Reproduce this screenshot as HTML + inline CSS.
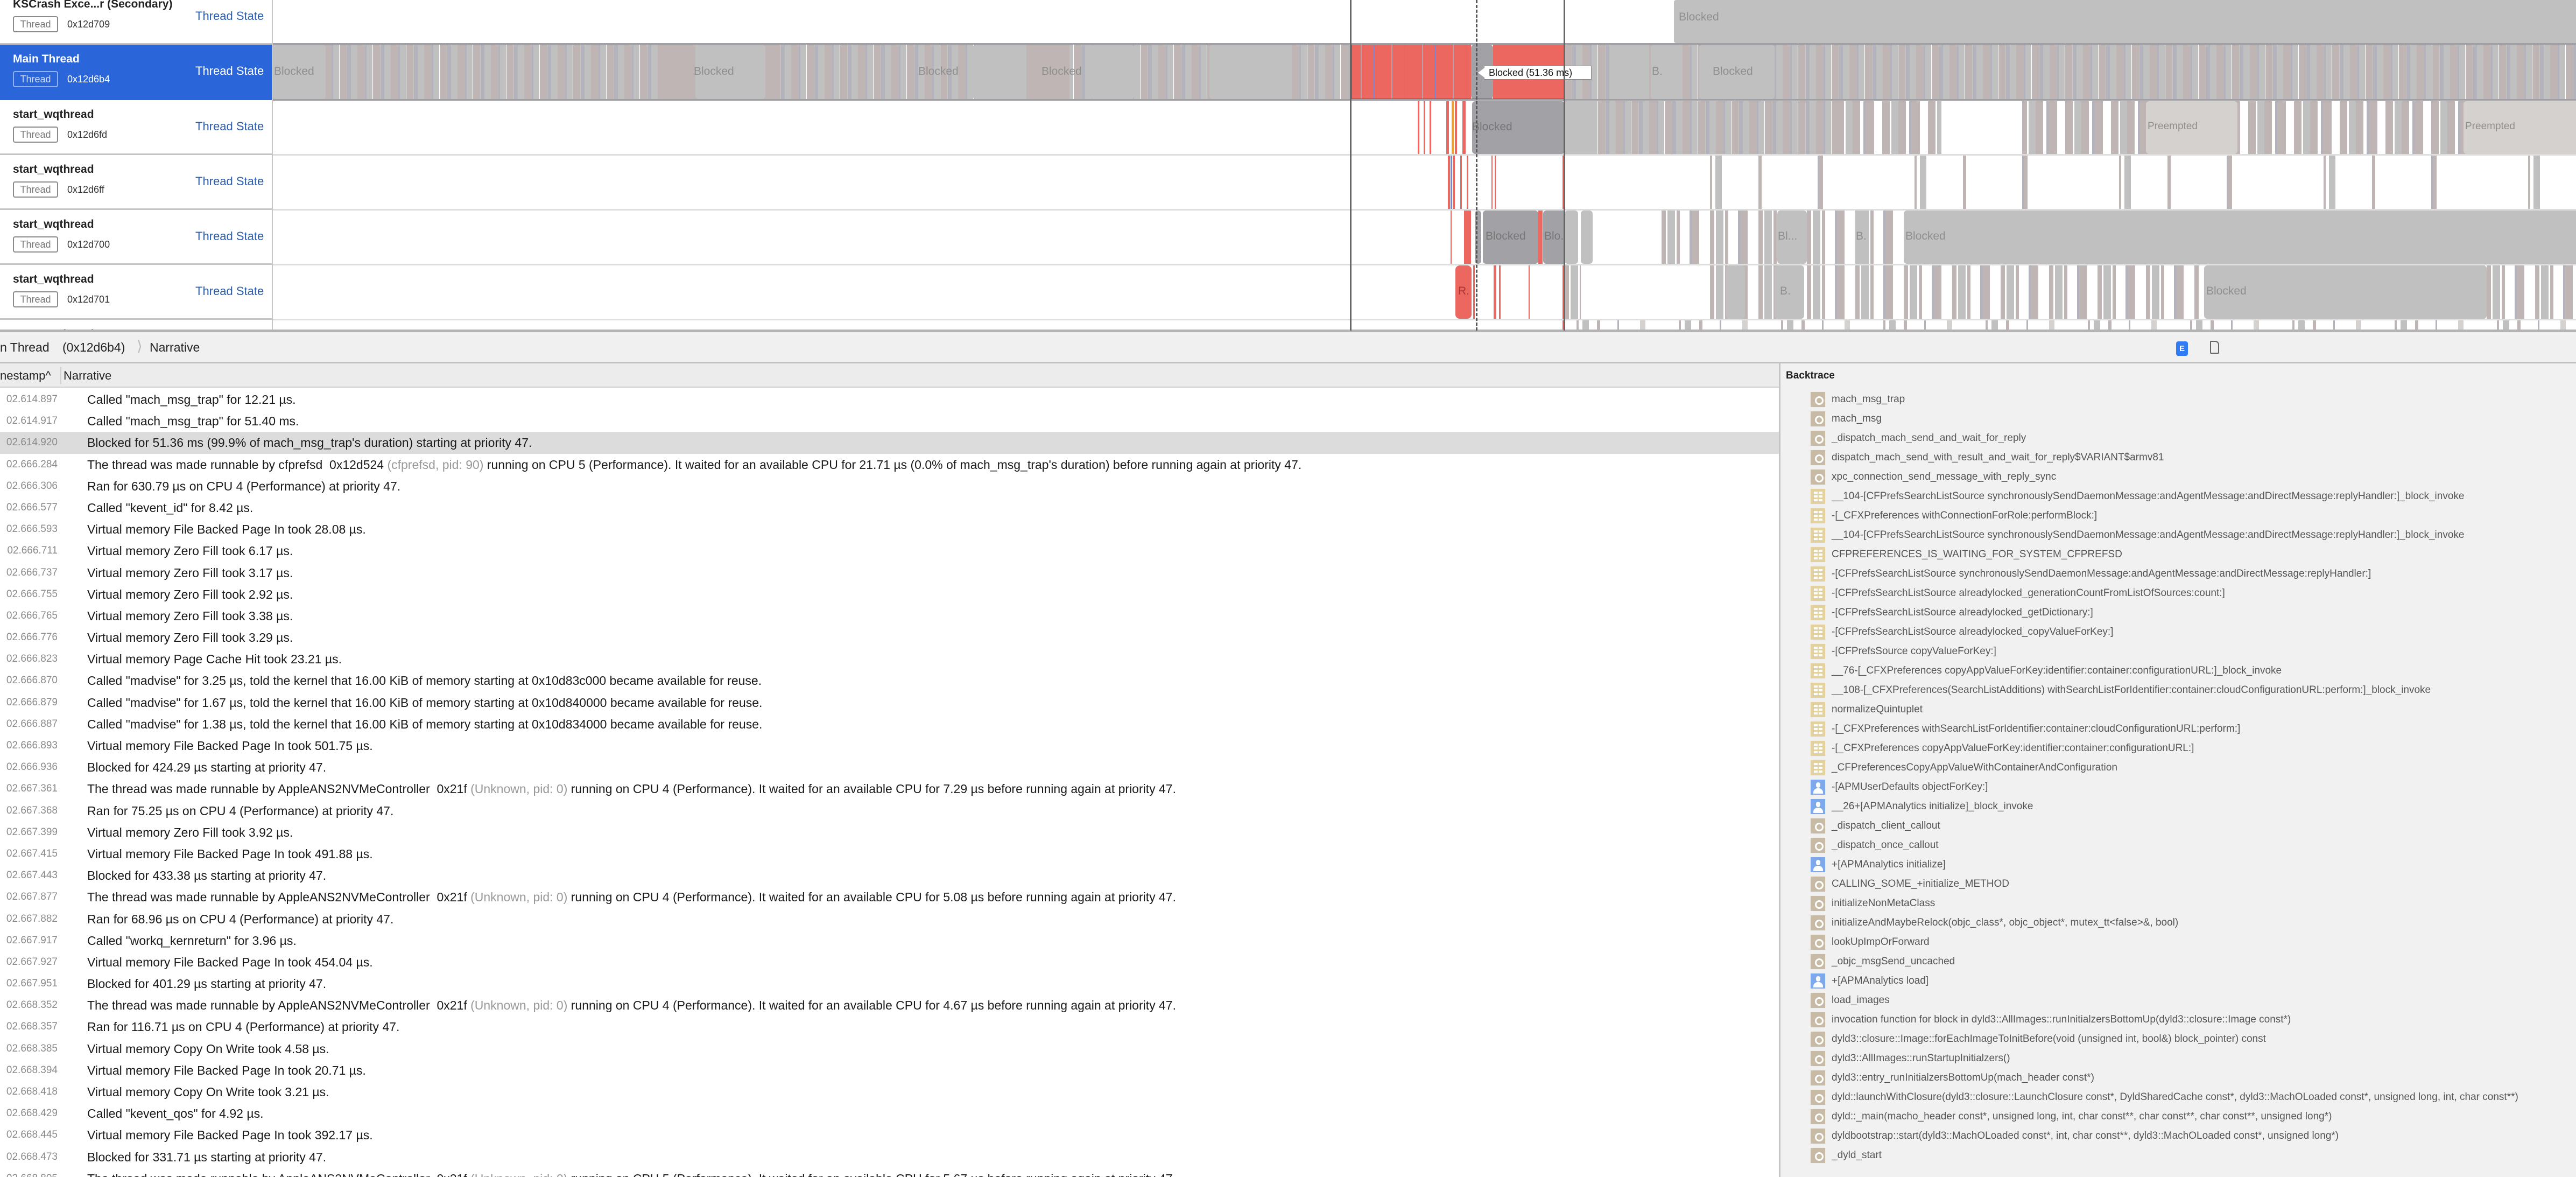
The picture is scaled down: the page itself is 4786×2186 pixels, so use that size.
<!DOCTYPE html>
<html><head><meta charset="utf-8"><style>
*{margin:0;padding:0;box-sizing:border-box}
body{width:4786px;height:2186px;overflow:hidden;background:#fff;font-family:"Liberation Sans",sans-serif;position:relative}
.a{position:absolute}
.left{left:0;top:0;width:507px;height:614px;border-right:2px solid #c8c8c8;overflow:hidden}
.trk{position:absolute;left:0;width:507px;height:102px;border-bottom:3px solid #c4c4c4}
.nm{position:absolute;left:24px;font-weight:bold;font-size:21px;color:#222;line-height:24px}
.badge{position:absolute;left:24px;height:30px;width:84px;border:2px solid #8a8a8a;border-radius:4px;font-size:18px;color:#777;text-align:center;line-height:26px}
.hex{position:absolute;left:125px;font-size:18px;color:#333}
.ts{position:absolute;left:363px;font-size:22px;color:#2c5fb0}
.row{position:absolute;left:507px;width:4279px;height:102px;overflow:hidden}
.sep{position:absolute;left:507px;width:4279px;height:3px;background:#dedede}
.blk{position:absolute;top:0;height:100%;background:#c0c0c0;border-radius:6px}
.lbl{position:absolute;font-size:21px;color:#8f8f8f}
.st1{background:repeating-linear-gradient(90deg,#bfb5b5 0 13px,#c8c4c4 13px 14px,#b2b3bc 14px 21px,#c0c0c0 21px 33px,#bfb5b5 33px 47px,#b2b3bc 47px 50px,#c0c0c0 50px 61px,#fff 61px 62px)}
.st2{background:repeating-linear-gradient(90deg,#fff 0 22px,#bfb5b5 22px 26px,#fff 26px 33px,#c0c0c0 33px 45px,#fff 45px 60px,#bfb5b5 60px 66px,#fff 66px 98px,#b2b3bc 98px 101px,#fff 101px 140px,#d5d1ce 140px 150px,#fff 150px 190px)}
.st2d{background:repeating-linear-gradient(90deg,#bfb5b5 0 14px,#fff 14px 17px,#c0c0c0 17px 30px,#bfb5b5 30px 44px,#fff 44px 50px,#b2b3bc 50px 54px,#bfb5b5 54px 70px,#fff 70px 85px)}
.st4{background:repeating-linear-gradient(90deg,#fff 0 60px,#bfb5b5 60px 64px,#fff 64px 70px,#c0c0c0 70px 82px,#fff 82px 150px,#bfb5b5 150px 156px,#fff 156px 260px,#b2b3bc 260px 263px,#bfb5b5 263px 270px,#fff 270px 380px)}
.st3{background:repeating-linear-gradient(90deg,#bfb5b5 0 8px,#fff 8px 11px,#c0c0c0 11px 25px,#fff 25px 28px,#bfb5b5 28px 34px,#fff 34px 52px,#b2b3bc 52px 56px,#bfb5b5 56px 70px,#fff 70px 90px)}
.red{position:absolute;top:0;height:100%;background:#eb675f}
.vl{position:absolute;top:0;height:614px;width:3px;background:#666}
.bc{left:0;top:614px;width:4786px;height:61px;background:#f0f0f0;border-top:3px solid #b4b4b4;border-bottom:3px solid #c0c0c0}
.hdr{left:0;top:675px;width:3305px;height:45px;background:#ececec;border-bottom:2px solid #d0d0d0;font-size:22px;color:#222}
.nar{left:0;top:722px;width:3305px;height:1464px;overflow:hidden}
.nr{height:40.2px;line-height:40.2px;white-space:nowrap;font-size:23px;color:#1a1a1a;position:relative}
.nr .t{position:absolute;left:0;width:107px;text-align:right;color:#8a8a8a;font-size:19px;overflow:hidden;direction:rtl}
.nr .x{position:absolute;left:162px}
.g{color:#999}
.right{left:3305px;top:675px;width:1481px;height:1511px;background:#f1f1f1;border-left:3px solid #c4c4c4;overflow:hidden}
.br{position:absolute;left:55px;height:36px;line-height:36px;white-space:nowrap;font-size:19px;color:#555}
.ic{position:absolute;left:0;top:3px;width:29px;height:30px;border:1px solid #eee}
.gear{background:#c8bba6}
.gear:after{content:"";position:absolute;left:8px;top:8px;width:10px;height:10px;border:3px solid #fff;border-radius:50%}
.cf{background:#e3d1a0}
.cf:after{content:"";position:absolute;left:6px;top:5px;width:16px;height:18px;background:repeating-linear-gradient(0deg,#fff 0 4px,transparent 4px 7px);}
.cf:before{content:"";position:absolute;left:13px;top:4px;width:2px;height:22px;background:#e3d1a0;z-index:2}
.usr{background:#7ea8ec}
.usr:after{content:"";position:absolute;left:10px;top:5px;width:8px;height:10px;background:#fff;border-radius:4px}
.usr:before{content:"";position:absolute;left:5px;top:16px;width:18px;height:10px;background:#fff;border-radius:8px 8px 0 0}
.bt{position:absolute;left:40px;}
</style></head><body>

<div class="a left">
 <div class="trk" style="top:-19px;height:102px"><div class="nm" style="top:15px">KSCrash Exce...r (Secondary)</div><div class="badge" style="top:49px">Thread</div><div class="hex" style="top:54px">0x12d709</div><div class="ts" style="top:36px">Thread State</div></div>
 <div class="trk" style="top:83px;height:103px;background:#2a66d9;border-bottom:none"><div class="nm" style="top:15px;color:#fff">Main Thread</div><div class="badge" style="top:49px;border-color:#8fb0ee;color:#cfdcf7">Thread</div><div class="hex" style="top:54px;color:#fff">0x12d6b4</div><div class="ts" style="top:36px;color:#fff">Thread State</div></div>
 <div class="trk" style="top:186px;height:102px"><div class="nm" style="top:15px">start_wqthread</div><div class="badge" style="top:49px">Thread</div><div class="hex" style="top:54px">0x12d6fd</div><div class="ts" style="top:36px">Thread State</div></div>
 <div class="trk" style="top:288px;height:102px"><div class="nm" style="top:15px">start_wqthread</div><div class="badge" style="top:49px">Thread</div><div class="hex" style="top:54px">0x12d6ff</div><div class="ts" style="top:36px">Thread State</div></div>
 <div class="trk" style="top:390px;height:102px"><div class="nm" style="top:15px">start_wqthread</div><div class="badge" style="top:49px">Thread</div><div class="hex" style="top:54px">0x12d700</div><div class="ts" style="top:36px">Thread State</div></div>
 <div class="trk" style="top:492px;height:102px"><div class="nm" style="top:15px">start_wqthread</div><div class="badge" style="top:49px">Thread</div><div class="hex" style="top:54px">0x12d701</div><div class="ts" style="top:36px">Thread State</div></div>
 <div class="trk" style="top:594px;height:30px;border:none"><div class="nm" style="top:15px">start_wqthread</div></div>
</div>

<div class="sep" style="top:80px;background:#a0a0a4"></div>
<div class="sep" style="top:184px;background:#a0a0a4"></div>
<div class="sep" style="top:286px"></div>
<div class="sep" style="top:388px"></div>
<div class="sep" style="top:490px"></div>
<div class="sep" style="top:592px"></div>
<div class="a" style="left:0;top:612px;width:4786px;height:3px;background:#b4b4b4"></div>

<div class="row" style="top:0;height:80px">
 <div class="blk" style="left:2603px;width:1700px;border-radius:4px"></div>
 <div class="lbl" style="left:2612px;top:20px">Blocked</div>
</div>
<div class="row" style="top:83px;height:101px">
 <div class="a st1" style="left:0;top:0;width:2003px;height:101px"></div>
 <div class="blk" style="left:0;width:98px"></div>
 <div class="blk" style="left:720px;width:220px;background:#bfb5b5;border-radius:0"></div>
 <div class="blk" style="left:785px;width:130px"></div>
 <div class="blk" style="left:1300px;width:120px"></div>
 <div class="blk" style="left:1400px;width:80px;background:#bfb5b5;border-radius:0"></div>
 <div class="blk" style="left:1520px;width:80px"></div>
 <div class="blk" style="left:1740px;width:150px"></div>
 <div class="lbl" style="left:2px;top:38px">Blocked</div>
 <div class="lbl" style="left:782px;top:38px">Blocked</div>
 <div class="lbl" style="left:1199px;top:38px">Blocked</div>
 <div class="lbl" style="left:1428px;top:38px">Blocked</div>
 <div class="red" style="left:2003px;width:223px"></div>
 <div class="a" style="left:2003px;top:0;width:223px;height:101px;background:repeating-linear-gradient(90deg,transparent 0 18px,#b8a0a8 18px 20px,transparent 20px 42px,#6f88d8 42px 43px,transparent 43px 57px)"></div>
 <div class="blk" style="left:2226px;width:41px;background:#a2a1a5"></div>
 <div class="red" style="left:2267px;width:133px"></div>
 <div class="a" style="left:2003px;top:-2px;width:397px;height:104px;border:2px solid #2f62e0"></div>
 <div class="a st1" style="left:2400px;top:0;width:1879px;height:101px"></div>
 <div class="blk" style="left:2490px;width:60px"></div>
 <div class="blk" style="left:2560px;width:50px"></div>
 <div class="blk" style="left:2650px;width:140px"></div>
 <div class="lbl" style="left:2562px;top:38px">B.</div>
 <div class="lbl" style="left:2675px;top:38px">Blocked</div>
</div>
<div class="a" style="left:2757px;top:122px;width:200px;height:26px;background:#fff;border:1px solid #888;font-size:18px;line-height:24px;padding-left:8px;color:#111">Blocked (51.36 ms)</div>
<div class="a" style="left:2746px;top:126px;width:0;height:0;border-top:9px solid transparent;border-bottom:9px solid transparent;border-right:12px solid #fff"></div>
<div class="row" style="top:188px;height:98px">
 <div class="red" style="left:2127px;width:3px"></div><div class="red" style="left:2138px;width:3px"></div><div class="red" style="left:2149px;width:3px"></div>
 <div class="red" style="left:2180px;width:5px"></div><div class="a" style="left:2190px;top:0;width:4px;height:98px;background:#f0a030"></div><div class="red" style="left:2196px;width:4px"></div><div class="red" style="left:2210px;width:6px"></div>
 <div class="blk" style="left:2228px;width:172px;background:#a2a1a5"></div>
 <div class="lbl" style="left:2228px;top:36px;color:#777">Blocked</div>
 <div class="a st1" style="left:2400px;top:0;width:1879px;height:98px"></div>
 <div class="blk" style="left:2400px;width:55px"></div>
 <div class="a st2d" style="left:2905px;top:0;width:1374px;height:98px"></div>
 <div class="a" style="left:3100px;top:0;width:150px;height:98px;background:#fff"></div>
 <div class="blk" style="left:3480px;width:170px;background:#d5d1ce"></div>
 <div class="lbl" style="left:3483px;top:36px;font-size:19px">Preempted</div>
 <div class="blk" style="left:4070px;width:260px;background:#d5d1ce"></div>
 <div class="lbl" style="left:4073px;top:36px;font-size:19px">Preempted</div>
</div>
<div class="row" style="top:289px;height:99px">
 <div class="red" style="left:2183px;width:4px"></div><div class="a" style="left:2188px;top:0;width:3px;height:99px;background:#6f88d8"></div><div class="red" style="left:2192px;width:4px"></div><div class="red" style="left:2206px;width:3px"></div><div class="red" style="left:2218px;width:3px"></div>
 <div class="red" style="left:2264px;width:2px"></div><div class="red" style="left:2270px;width:2px"></div><div class="red" style="left:2396px;width:3px"></div>
 <div class="a st4" style="left:2610px;top:0;width:1669px;height:99px"></div>
</div>
<div class="row" style="top:391px;height:99px">
 <div class="red" style="left:2188px;width:2px"></div><div class="red" style="left:2213px;width:13px"></div>
 <div class="blk" style="left:2233px;width:12px;background:#a2a1a5"></div>
 <div class="blk" style="left:2248px;width:103px;background:#a2a1a5"></div>
 <div class="red" style="left:2351px;width:8px"></div>
 <div class="blk" style="left:2360px;width:40px;background:#a2a1a5;border-radius:6px 0 0 6px"></div>
 <div class="lbl" style="left:2253px;top:36px;color:#777">Blocked</div>
 <div class="lbl" style="left:2362px;top:36px;color:#777">Blo...</div>
 <div class="blk" style="left:2400px;width:25px"></div><div class="blk" style="left:2430px;width:22px"></div>
 <div class="a st3" style="left:2580px;top:0;width:450px;height:99px"></div>
 <div class="blk" style="left:2795px;width:55px"></div><div class="blk" style="left:2940px;width:25px"></div>
 <div class="blk" style="left:3030px;width:1249px;border-radius:6px 0 0 6px"></div>
 <div class="lbl" style="left:2796px;top:36px">Bl...</div><div class="lbl" style="left:2941px;top:36px">B.</div><div class="lbl" style="left:3033px;top:36px">Blocked</div>
</div>
<div class="row" style="top:493px;height:99px">
 <div class="red" style="left:2197px;width:30px;border-radius:8px"></div>
 <div class="lbl" style="left:2202px;top:36px;color:#a33">R.</div>
 <div class="red" style="left:2230px;width:3px"></div><div class="red" style="left:2268px;width:5px"></div><div class="red" style="left:2278px;width:3px"></div><div class="red" style="left:2333px;width:2px"></div><div class="red" style="left:2396px;width:3px"></div>
 <div class="a st3" style="left:2400px;top:0;width:1180px;height:99px"></div>
 <div class="a" style="left:2430px;top:0;width:240px;height:99px;background:#fff"></div>
 <div class="blk" style="left:2700px;width:35px"></div><div class="blk" style="left:2790px;width:55px"></div>
 <div class="lbl" style="left:2800px;top:36px">B.</div>
 <div class="a st2" style="left:3580px;top:0;width:699px;height:99px"></div>
 <div class="blk" style="left:3588px;width:525px"></div>
 <div class="lbl" style="left:3592px;top:36px">Blocked</div>
 <div class="a st3" style="left:4113px;top:0;width:166px;height:99px"></div>
</div>
<div class="row" style="top:595px;height:17px">
 <div class="red" style="left:2396px;width:3px"></div>
 <div class="a st2" style="left:2400px;top:0;width:1879px;height:17px"></div>
</div>
<div class="vl" style="left:2508px"></div>
<div class="vl" style="left:2905px"></div>
<div class="a" style="left:2742px;top:0;height:614px;width:0;border-left:3px dashed #555"></div>

<div class="a bc"><div class="a" style="left:0;top:15px;font-size:23px;color:#222;white-space:nowrap">n Thread</div><div class="a" style="left:116px;top:15px;font-size:23px;color:#222">(0x12d6b4)</div><div class="a" style="left:254px;top:11px;font-size:27px;color:#bbb">&#x27E9;</div><div class="a" style="left:278px;top:15px;font-size:23px;color:#222">Narrative</div>
 <div class="a" style="left:4043px;top:17px;width:22px;height:27px;background:#2f7cf6;border-radius:4px;color:#fff;font-size:15px;text-align:center;line-height:27px;font-weight:bold">E</div>
 <div class="a" style="left:4106px;top:16px;width:17px;height:24px;border:2px solid #666;border-radius:2px 7px 2px 2px"></div>
</div>
<div class="a hdr"><div class="a" style="left:0;top:10px;white-space:nowrap">nestamp^</div><div class="a" style="left:112px;top:6px;width:2px;height:32px;background:#d0d0d0"></div><div class="a" style="left:118px;top:10px">Narrative</div></div>

<div class="a nar">
<div class="nr"><span class="t">02.614.897</span><span class="x">Called "mach_msg_trap" for 12.21 µs.</span></div>
<div class="nr"><span class="t">02.614.917</span><span class="x">Called "mach_msg_trap" for 51.40 ms.</span></div>
<div class="nr" style="background:#dcdcdc"><span class="t">02.614.920</span><span class="x">Blocked for 51.36 ms (99.9% of mach_msg_trap's duration) starting at priority 47.</span></div>
<div class="nr"><span class="t">02.666.284</span><span class="x">The thread was made runnable by cfprefsd&nbsp; 0x12d524 <span class="g">(cfprefsd, pid: 90)</span> running on CPU 5 (Performance). It waited for an available CPU for 21.71 µs (0.0% of mach_msg_trap's duration) before running again at priority 47.</span></div>
<div class="nr"><span class="t">02.666.306</span><span class="x">Ran for 630.79 µs on CPU 4 (Performance) at priority 47.</span></div>
<div class="nr"><span class="t">02.666.577</span><span class="x">Called "kevent_id" for 8.42 µs.</span></div>
<div class="nr"><span class="t">02.666.593</span><span class="x">Virtual memory File Backed Page In took 28.08 µs.</span></div>
<div class="nr"><span class="t">02.666.711</span><span class="x">Virtual memory Zero Fill took 6.17 µs.</span></div>
<div class="nr"><span class="t">02.666.737</span><span class="x">Virtual memory Zero Fill took 3.17 µs.</span></div>
<div class="nr"><span class="t">02.666.755</span><span class="x">Virtual memory Zero Fill took 2.92 µs.</span></div>
<div class="nr"><span class="t">02.666.765</span><span class="x">Virtual memory Zero Fill took 3.38 µs.</span></div>
<div class="nr"><span class="t">02.666.776</span><span class="x">Virtual memory Zero Fill took 3.29 µs.</span></div>
<div class="nr"><span class="t">02.666.823</span><span class="x">Virtual memory Page Cache Hit took 23.21 µs.</span></div>
<div class="nr"><span class="t">02.666.870</span><span class="x">Called "madvise" for 3.25 µs, told the kernel that 16.00 KiB of memory starting at 0x10d83c000 became available for reuse.</span></div>
<div class="nr"><span class="t">02.666.879</span><span class="x">Called "madvise" for 1.67 µs, told the kernel that 16.00 KiB of memory starting at 0x10d840000 became available for reuse.</span></div>
<div class="nr"><span class="t">02.666.887</span><span class="x">Called "madvise" for 1.38 µs, told the kernel that 16.00 KiB of memory starting at 0x10d834000 became available for reuse.</span></div>
<div class="nr"><span class="t">02.666.893</span><span class="x">Virtual memory File Backed Page In took 501.75 µs.</span></div>
<div class="nr"><span class="t">02.666.936</span><span class="x">Blocked for 424.29 µs starting at priority 47.</span></div>
<div class="nr"><span class="t">02.667.361</span><span class="x">The thread was made runnable by AppleANS2NVMeController&nbsp; 0x21f <span class="g">(Unknown, pid: 0)</span> running on CPU 4 (Performance). It waited for an available CPU for 7.29 µs before running again at priority 47.</span></div>
<div class="nr"><span class="t">02.667.368</span><span class="x">Ran for 75.25 µs on CPU 4 (Performance) at priority 47.</span></div>
<div class="nr"><span class="t">02.667.399</span><span class="x">Virtual memory Zero Fill took 3.92 µs.</span></div>
<div class="nr"><span class="t">02.667.415</span><span class="x">Virtual memory File Backed Page In took 491.88 µs.</span></div>
<div class="nr"><span class="t">02.667.443</span><span class="x">Blocked for 433.38 µs starting at priority 47.</span></div>
<div class="nr"><span class="t">02.667.877</span><span class="x">The thread was made runnable by AppleANS2NVMeController&nbsp; 0x21f <span class="g">(Unknown, pid: 0)</span> running on CPU 4 (Performance). It waited for an available CPU for 5.08 µs before running again at priority 47.</span></div>
<div class="nr"><span class="t">02.667.882</span><span class="x">Ran for 68.96 µs on CPU 4 (Performance) at priority 47.</span></div>
<div class="nr"><span class="t">02.667.917</span><span class="x">Called "workq_kernreturn" for 3.96 µs.</span></div>
<div class="nr"><span class="t">02.667.927</span><span class="x">Virtual memory File Backed Page In took 454.04 µs.</span></div>
<div class="nr"><span class="t">02.667.951</span><span class="x">Blocked for 401.29 µs starting at priority 47.</span></div>
<div class="nr"><span class="t">02.668.352</span><span class="x">The thread was made runnable by AppleANS2NVMeController&nbsp; 0x21f <span class="g">(Unknown, pid: 0)</span> running on CPU 4 (Performance). It waited for an available CPU for 4.67 µs before running again at priority 47.</span></div>
<div class="nr"><span class="t">02.668.357</span><span class="x">Ran for 116.71 µs on CPU 4 (Performance) at priority 47.</span></div>
<div class="nr"><span class="t">02.668.385</span><span class="x">Virtual memory Copy On Write took 4.58 µs.</span></div>
<div class="nr"><span class="t">02.668.394</span><span class="x">Virtual memory File Backed Page In took 20.71 µs.</span></div>
<div class="nr"><span class="t">02.668.418</span><span class="x">Virtual memory Copy On Write took 3.21 µs.</span></div>
<div class="nr"><span class="t">02.668.429</span><span class="x">Called "kevent_qos" for 4.92 µs.</span></div>
<div class="nr"><span class="t">02.668.445</span><span class="x">Virtual memory File Backed Page In took 392.17 µs.</span></div>
<div class="nr"><span class="t">02.668.473</span><span class="x">Blocked for 331.71 µs starting at priority 47.</span></div>
<div class="nr"><span class="t">02.668.805</span><span class="x">The thread was made runnable by AppleANS2NVMeController&nbsp; 0x21f <span class="g">(Unknown, pid: 0)</span> running on CPU 5 (Performance). It waited for an available CPU for 5.67 µs before running again at priority 47.</span></div>
</div>

<div class="a right">
<div class="a" style="left:10px;top:12px;font-size:19px;font-weight:bold;color:#222">Backtrace</div>
<div class="br" style="top:49px"><div class="ic gear"></div><span class="bt">mach_msg_trap</span></div>
<div class="br" style="top:85px"><div class="ic gear"></div><span class="bt">mach_msg</span></div>
<div class="br" style="top:121px"><div class="ic gear"></div><span class="bt">_dispatch_mach_send_and_wait_for_reply</span></div>
<div class="br" style="top:157px"><div class="ic gear"></div><span class="bt">dispatch_mach_send_with_result_and_wait_for_reply$VARIANT$armv81</span></div>
<div class="br" style="top:193px"><div class="ic gear"></div><span class="bt">xpc_connection_send_message_with_reply_sync</span></div>
<div class="br" style="top:229px"><div class="ic cf"></div><span class="bt">__104-[CFPrefsSearchListSource synchronouslySendDaemonMessage:andAgentMessage:andDirectMessage:replyHandler:]_block_invoke</span></div>
<div class="br" style="top:265px"><div class="ic cf"></div><span class="bt">-[_CFXPreferences withConnectionForRole:performBlock:]</span></div>
<div class="br" style="top:301px"><div class="ic cf"></div><span class="bt">__104-[CFPrefsSearchListSource synchronouslySendDaemonMessage:andAgentMessage:andDirectMessage:replyHandler:]_block_invoke</span></div>
<div class="br" style="top:337px"><div class="ic cf"></div><span class="bt">CFPREFERENCES_IS_WAITING_FOR_SYSTEM_CFPREFSD</span></div>
<div class="br" style="top:373px"><div class="ic cf"></div><span class="bt">-[CFPrefsSearchListSource synchronouslySendDaemonMessage:andAgentMessage:andDirectMessage:replyHandler:]</span></div>
<div class="br" style="top:409px"><div class="ic cf"></div><span class="bt">-[CFPrefsSearchListSource alreadylocked_generationCountFromListOfSources:count:]</span></div>
<div class="br" style="top:445px"><div class="ic cf"></div><span class="bt">-[CFPrefsSearchListSource alreadylocked_getDictionary:]</span></div>
<div class="br" style="top:481px"><div class="ic cf"></div><span class="bt">-[CFPrefsSearchListSource alreadylocked_copyValueForKey:]</span></div>
<div class="br" style="top:517px"><div class="ic cf"></div><span class="bt">-[CFPrefsSource copyValueForKey:]</span></div>
<div class="br" style="top:553px"><div class="ic cf"></div><span class="bt">__76-[_CFXPreferences copyAppValueForKey:identifier:container:configurationURL:]_block_invoke</span></div>
<div class="br" style="top:589px"><div class="ic cf"></div><span class="bt">__108-[_CFXPreferences(SearchListAdditions) withSearchListForIdentifier:container:cloudConfigurationURL:perform:]_block_invoke</span></div>
<div class="br" style="top:625px"><div class="ic cf"></div><span class="bt">normalizeQuintuplet</span></div>
<div class="br" style="top:661px"><div class="ic cf"></div><span class="bt">-[_CFXPreferences withSearchListForIdentifier:container:cloudConfigurationURL:perform:]</span></div>
<div class="br" style="top:697px"><div class="ic cf"></div><span class="bt">-[_CFXPreferences copyAppValueForKey:identifier:container:configurationURL:]</span></div>
<div class="br" style="top:733px"><div class="ic cf"></div><span class="bt">_CFPreferencesCopyAppValueWithContainerAndConfiguration</span></div>
<div class="br" style="top:769px"><div class="ic usr"></div><span class="bt">-[APMUserDefaults objectForKey:]</span></div>
<div class="br" style="top:805px"><div class="ic usr"></div><span class="bt">__26+[APMAnalytics initialize]_block_invoke</span></div>
<div class="br" style="top:841px"><div class="ic gear"></div><span class="bt">_dispatch_client_callout</span></div>
<div class="br" style="top:877px"><div class="ic gear"></div><span class="bt">_dispatch_once_callout</span></div>
<div class="br" style="top:913px"><div class="ic usr"></div><span class="bt">+[APMAnalytics initialize]</span></div>
<div class="br" style="top:949px"><div class="ic gear"></div><span class="bt">CALLING_SOME_+initialize_METHOD</span></div>
<div class="br" style="top:985px"><div class="ic gear"></div><span class="bt">initializeNonMetaClass</span></div>
<div class="br" style="top:1021px"><div class="ic gear"></div><span class="bt">initializeAndMaybeRelock(objc_class*, objc_object*, mutex_tt&lt;false&gt;&amp;, bool)</span></div>
<div class="br" style="top:1057px"><div class="ic gear"></div><span class="bt">lookUpImpOrForward</span></div>
<div class="br" style="top:1093px"><div class="ic gear"></div><span class="bt">_objc_msgSend_uncached</span></div>
<div class="br" style="top:1129px"><div class="ic usr"></div><span class="bt">+[APMAnalytics load]</span></div>
<div class="br" style="top:1165px"><div class="ic gear"></div><span class="bt">load_images</span></div>
<div class="br" style="top:1201px"><div class="ic gear"></div><span class="bt">invocation function for block in dyld3::AllImages::runInitialzersBottomUp(dyld3::closure::Image const*)</span></div>
<div class="br" style="top:1237px"><div class="ic gear"></div><span class="bt">dyld3::closure::Image::forEachImageToInitBefore(void (unsigned int, bool&amp;) block_pointer) const</span></div>
<div class="br" style="top:1273px"><div class="ic gear"></div><span class="bt">dyld3::AllImages::runStartupInitialzers()</span></div>
<div class="br" style="top:1309px"><div class="ic gear"></div><span class="bt">dyld3::entry_runInitialzersBottomUp(mach_header const*)</span></div>
<div class="br" style="top:1345px"><div class="ic gear"></div><span class="bt">dyld::launchWithClosure(dyld3::closure::LaunchClosure const*, DyldSharedCache const*, dyld3::MachOLoaded const*, unsigned long, int, char const**)</span></div>
<div class="br" style="top:1381px"><div class="ic gear"></div><span class="bt">dyld::_main(macho_header const*, unsigned long, int, char const**, char const**, char const**, unsigned long*)</span></div>
<div class="br" style="top:1417px"><div class="ic gear"></div><span class="bt">dyldbootstrap::start(dyld3::MachOLoaded const*, int, char const**, dyld3::MachOLoaded const*, unsigned long*)</span></div>
<div class="br" style="top:1453px"><div class="ic gear"></div><span class="bt">_dyld_start</span></div>
</div>
</body></html>
